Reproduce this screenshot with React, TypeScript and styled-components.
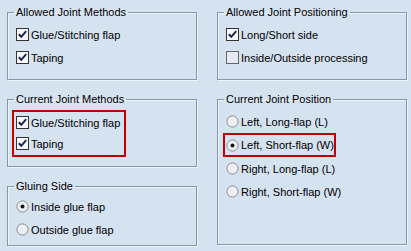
import styled, { createGlobalStyle } from 'styled-components'

const GlobalStyle = createGlobalStyle`
  html, body {
    margin: 0;
    padding: 0;
    background: #d5e2f0;
  }
  body {
    font-family: "Liberation Sans", Arial, sans-serif;
    font-size: 11px;
    color: #000;
  }
`

const Page = styled.div`
  display: grid;
  grid-template-columns: 190px 190px;
  column-gap: 20px;
  align-items: start;
  box-sizing: border-box;
  width: 411px;
  height: 251px;
  padding: 6px 0 0 7px;
`

const Column = styled.div`
  display: flex;
  flex-direction: column;
  gap: 13px;
`

const Group = styled.fieldset<{ $pt: number; $pb: number }>`
  margin: 0;
  min-width: 0;
  padding: ${(p) => p.$pt}px 0 ${(p) => p.$pb}px 6px;
  border: 1px solid #8796aa;
  box-shadow: inset 1px 1px 0 #eef3f9, 1px 1px 0 #eef3f9;
`

const Legend = styled.legend`
  padding: 0 2px;
  line-height: 13px;
  height: 13px;
`

const Body = styled.div`
  display: flex;
  flex-direction: column;
  padding-left: 2px;
`

const Row = styled.div<{ $h?: number }>`
  display: flex;
  align-items: center;
  gap: 2px;
  height: ${(p) => p.$h ?? 23}px;
  white-space: nowrap;
`

const Highlight = styled.div<{ $w: number; $shift: number; $pb?: number }>`
  display: flex;
  flex-direction: column;
  width: ${(p) => p.$w}px;
  box-sizing: border-box;
  margin-left: -${(p) => p.$shift}px;
  padding: 0 0 ${(p) => p.$pb ?? 0}px ${(p) => p.$shift - 2}px;
  border: 2px solid #c00000;
`

const Glyph = styled.svg`
  flex: none;
  display: block;
`

function Check({ checked }: { checked: boolean }) {
  return (
    <Glyph width="13" height="13" viewBox="0 0 13 13">
      <rect
        x="0.5"
        y="0.5"
        width="12"
        height="12"
        fill={checked ? '#f7f8fb' : '#e6e9ef'}
        stroke={checked ? '#333' : '#666'}
      />
      {checked && (
        <path
          d="M2.8 6.2 L5.3 8.8 L10.2 3.2"
          fill="none"
          stroke="#1c2550"
          strokeWidth="2"
        />
      )}
    </Glyph>
  )
}

function Radio({ checked }: { checked: boolean }) {
  return (
    <Glyph width="13" height="13" viewBox="0 0 13 13">
      <circle cx="6.5" cy="6.5" r="5.6" fill="#eceff4" stroke="#8a8d92" />
      {checked && <circle cx="6.5" cy="6.5" r="2" fill="#151515" />}
    </Glyph>
  )
}

function CheckRow({ label, checked, h }: { label: string; checked: boolean; h?: number }) {
  return (
    <Row $h={h}>
      <Check checked={checked} />
      <span>{label}</span>
    </Row>
  )
}

function RadioRow({ label, checked, h }: { label: string; checked: boolean; h?: number }) {
  return (
    <Row $h={h}>
      <Radio checked={checked} />
      <span>{label}</span>
    </Row>
  )
}

export default function App() {
  return (
    <>
      <GlobalStyle />
      <Page>
        <Column>
          <Group $pt={4} $pb={10}>
            <Legend>Allowed Joint Methods</Legend>
            <Body>
              <CheckRow label="Glue/Stitching flap" checked />
              <CheckRow label="Taping" checked />
            </Body>
          </Group>

          <Group $pt={4} $pb={9}>
            <Legend>Current Joint Methods</Legend>
            <Body>
              <Highlight $w={114} $shift={4} $pb={1}>
                <CheckRow label="Glue/Stitching flap" checked h={21} />
                <CheckRow label="Taping" checked h={21} />
              </Highlight>
            </Body>
          </Group>

          <Group $pt={2} $pb={4}>
            <Legend>Gluing Side</Legend>
            <Body>
              <RadioRow label="Inside glue flap" checked />
              <RadioRow label="Outside glue flap" checked={false} />
            </Body>
          </Group>
        </Column>

        <Column>
          <Group $pt={4} $pb={10}>
            <Legend>Allowed Joint Positioning</Legend>
            <Body>
              <CheckRow label="Long/Short side" checked />
              <CheckRow label="Inside/Outside processing" checked={false} />
            </Body>
          </Group>

          <Group $pt={4} $pb={41}>
            <Legend>Current Joint Position</Legend>
            <Body>
              <RadioRow label="Left, Long-flap (L)" checked={false} />
              <Highlight $w={113} $shift={3}>
                <RadioRow label="Left, Short-flap (W)" checked h={20} />
              </Highlight>
              <RadioRow label="Right, Long-flap (L)" checked={false} />
              <RadioRow label="Right, Short-flap (W)" checked={false} />
            </Body>
          </Group>
        </Column>
      </Page>
    </>
  )
}
